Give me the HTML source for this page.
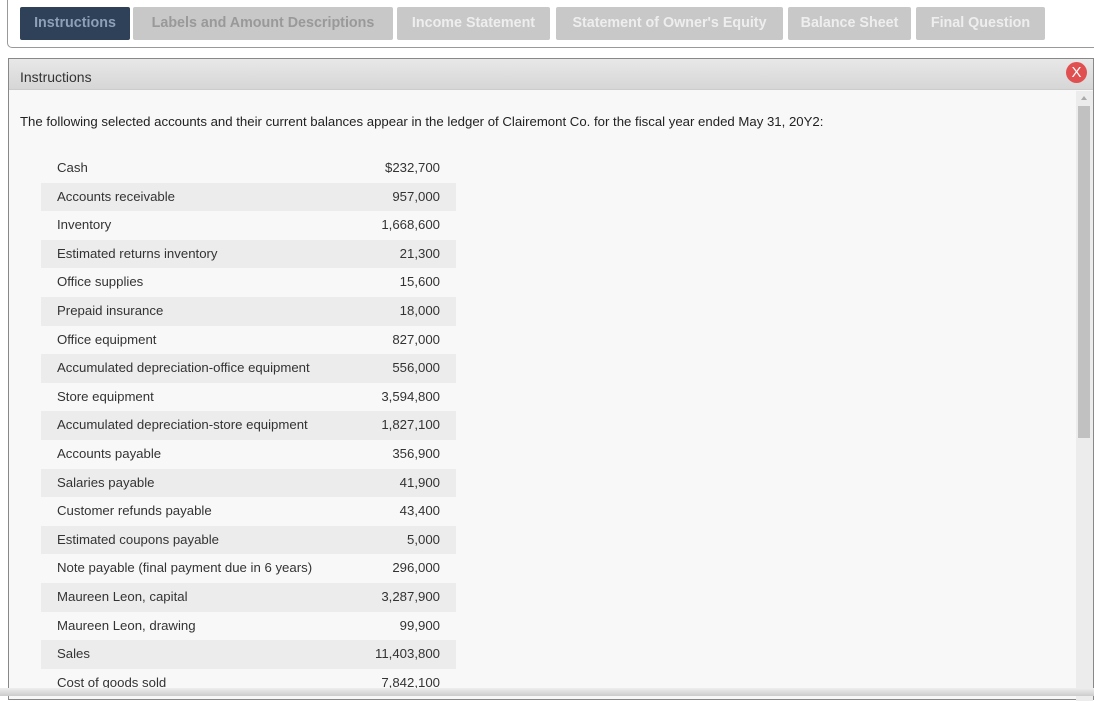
<!DOCTYPE html>
<html><head><style>
body{margin:0;width:1094px;height:696px;overflow:hidden;background:#fff;font-family:"Liberation Sans",Arial,sans-serif;position:relative}
.top{position:absolute;left:7px;top:-2px;width:1100px;height:49px;border:1px solid #999;border-top:none;border-right:none;border-radius:0 0 0 5px}
.tab{position:absolute;top:7px;height:33px;line-height:33px;background:#c8c8c8;color:#eee;font-weight:bold;font-size:14.3px;text-align:center;border-radius:2px;white-space:nowrap;overflow:hidden}
.panel{position:absolute;left:8px;top:58px;width:1084px;height:640px;border:1px solid #888;background:#f8f8f8}
.hdr{height:30px;background:linear-gradient(#e8e8e8,#d6d6d6);border-bottom:1px solid #ccc;font-size:14px;color:#333;line-height:36px;padding-left:11px}
.x{position:absolute;left:1057px;top:3px;width:21px;height:21px;border-radius:50%;background:#e05050;color:#fff;text-align:center;line-height:21px;font-size:15px}
.intro{position:absolute;left:11px;top:55px;font-size:13.2px;color:#222}
.row{position:absolute;left:32px;width:415px;height:28.6px;font-size:13.2px;color:#333;line-height:28.6px}
.row.s{background:#ececec}
.row span{position:absolute;left:16px}
.row b{position:absolute;right:16px;font-weight:normal}
.sb{position:absolute;left:1067px;top:32px;width:17px;height:610px;background:#ececec}
.th{position:absolute;left:2px;top:15px;width:12px;height:332px;background:#c1c1c1}
.ar{position:absolute;left:5px;top:5px;width:0;height:0;border-left:3px solid transparent;border-right:3px solid transparent;border-bottom:4px solid #aaa}
.bot{position:absolute;left:0;top:688px;width:1094px;height:8px;background:linear-gradient(#eee,#ccc)}
</style></head><body>
<div class="top"></div>
<div class="tab" style="left:20px;width:110px;background:#2f4158;color:#8ea0b8">Instructions</div>
<div class="tab" style="left:133px;width:260px;color:#999">Labels and Amount Descriptions</div>
<div class="tab" style="left:397px;width:153px">Income Statement</div>
<div class="tab" style="left:556px;width:227px">Statement of Owner's Equity</div>
<div class="tab" style="left:788px;width:123px">Balance Sheet</div>
<div class="tab" style="left:916px;width:129px">Final Question</div>
<div class="panel">
<div class="hdr">Instructions</div>
<div class="x">X</div>
<div class="intro">The following selected accounts and their current balances appear in the ledger of Clairemont Co. for the fiscal year ended May 31, 20Y2:</div>
<div class="row" style="top:95px"><span>Cash</span><b>$232,700</b></div>
<div class="row s" style="top:123.6px"><span>Accounts receivable</span><b>957,000</b></div>
<div class="row" style="top:152.2px"><span>Inventory</span><b>1,668,600</b></div>
<div class="row s" style="top:180.8px"><span>Estimated returns inventory</span><b>21,300</b></div>
<div class="row" style="top:209.4px"><span>Office supplies</span><b>15,600</b></div>
<div class="row s" style="top:238px"><span>Prepaid insurance</span><b>18,000</b></div>
<div class="row" style="top:266.6px"><span>Office equipment</span><b>827,000</b></div>
<div class="row s" style="top:295.2px"><span>Accumulated depreciation-office equipment</span><b>556,000</b></div>
<div class="row" style="top:323.8px"><span>Store equipment</span><b>3,594,800</b></div>
<div class="row s" style="top:352.4px"><span>Accumulated depreciation-store equipment</span><b>1,827,100</b></div>
<div class="row" style="top:381px"><span>Accounts payable</span><b>356,900</b></div>
<div class="row s" style="top:409.6px"><span>Salaries payable</span><b>41,900</b></div>
<div class="row" style="top:438.2px"><span>Customer refunds payable</span><b>43,400</b></div>
<div class="row s" style="top:466.8px"><span>Estimated coupons payable</span><b>5,000</b></div>
<div class="row" style="top:495.4px"><span>Note payable (final payment due in 6 years)</span><b>296,000</b></div>
<div class="row s" style="top:524px"><span>Maureen Leon, capital</span><b>3,287,900</b></div>
<div class="row" style="top:552.6px"><span>Maureen Leon, drawing</span><b>99,900</b></div>
<div class="row s" style="top:581.2px"><span>Sales</span><b>11,403,800</b></div>
<div class="row" style="top:609.8px"><span>Cost of goods sold</span><b>7,842,100</b></div>
<div class="sb"><div class="ar"></div><div class="th"></div></div>
</div>
<div class="bot"></div>
</body></html>
